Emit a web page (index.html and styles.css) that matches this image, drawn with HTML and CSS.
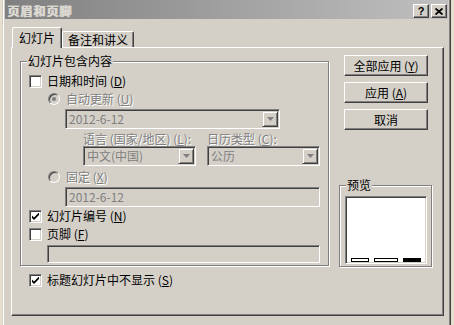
FILE: index.html
```html
<!DOCTYPE html>
<html lang="zh-CN">
<head>
    <meta charset="UTF-8">
    <title>页眉和页脚</title>
    <link rel="stylesheet" href="styles.css">
</head>
<body>
    <div class="dialog">
        <div class="titlebar">
            <span class="title">页眉和页脚</span>
            <div class="caption-btns">
                <span class="cap-btn">?</span>
                <span class="cap-btn">
                    <svg width="8" height="7" viewBox="0 0 8 7"><path d="M0.5 0.5 L7.5 6.5 M7.5 0.5 L0.5 6.5" stroke="#000" stroke-width="1.8" fill="none"/></svg>
                </span>
            </div>
        </div>

        <div class="tabs">
            <div class="tab active">幻灯片</div>
            <div class="tab notes">备注和讲义</div>
        </div>

        <div class="panel">
            <div class="panel-top">
                <!-- 幻灯片包含内容 -->
                <div class="group content-group">
                    <span class="group-title">幻灯片包含内容</span>

                    <div class="row mt0">
                        <span class="check"></span>
                        <span>日期和时间 (<u>D</u>)</span>
                    </div>
                    <div class="row indent mt4 disabled">
                        <span class="radio on"></span>
                        <span>自动更新 (<u>U</u>)</span>
                    </div>
                    <div class="field drop-field date1 mt3">
                        <span class="value">2012-6-12</span>
                        <span class="drop"><svg width="7" height="4" viewBox="0 0 7 4"><path d="M0 0 H7 L3.5 4 Z" fill="#808080"/></svg></span>
                    </div>
                    <div class="pair labels mt3 disabled">
                        <span>语言 (国家/地区) (<u>L</u>):</span>
                        <span>日历类型 (<u>C</u>):</span>
                    </div>
                    <div class="pair mt0">
                        <div class="field drop-field">
                            <span class="value">中文(中国)</span>
                            <span class="drop"><svg width="7" height="4" viewBox="0 0 7 4"><path d="M0 0 H7 L3.5 4 Z" fill="#808080"/></svg></span>
                        </div>
                        <div class="field drop-field">
                            <span class="value">公历</span>
                            <span class="drop"><svg width="7" height="4" viewBox="0 0 7 4"><path d="M0 0 H7 L3.5 4 Z" fill="#808080"/></svg></span>
                        </div>
                    </div>
                    <div class="row indent mt4 disabled">
                        <span class="radio"></span>
                        <span>固定 (<u>X</u>)</span>
                    </div>
                    <div class="field date2 mt3">
                        <span class="value">2012-6-12</span>
                    </div>
                    <div class="row mt2">
                        <span class="check"><svg width="7" height="7" viewBox="0 0 7 7"><path d="M0 2.5 L2 4.5 L7 -0.5 L7 2 L2 7 L0 5 Z" fill="#000"/></svg></span>
                        <span>幻灯片编号 (<u>N</u>)</span>
                    </div>
                    <div class="row mt4">
                        <span class="check"></span>
                        <span>页脚 (<u>F</u>)</span>
                    </div>
                    <div class="field footer-field mt4"></div>
                </div>

                <div class="side">
                    <div class="buttons">
                        <div class="btn">全部应用 (<u>Y</u>)</div>
                        <div class="btn">应用 (<u>A</u>)</div>
                        <div class="btn">取消</div>
                    </div>
                    <div class="group preview-group">
                        <span class="group-title">预览</span>
                        <div class="preview">
                            <span class="bar"></span>
                            <span class="bar wide"></span>
                            <span class="bar solid"></span>
                        </div>
                    </div>
                </div>
            </div>

            <div class="row bottom-row">
                <span class="check"><svg width="7" height="7" viewBox="0 0 7 7"><path d="M0 2.5 L2 4.5 L7 -0.5 L7 2 L2 7 L0 5 Z" fill="#000"/></svg></span>
                <span>标题幻灯片中不显示 (<u>S</u>)</span>
            </div>
        </div>
    </div>
</body>
</html>
```

FILE: styles.css
```css
* {
    box-sizing: border-box;
}
html, body {
    margin: 0;
}
body {
    width: 454px;
    height: 325px;
    overflow: hidden;
    background-color: #e6dfce;
    font-family: "Noto Sans CJK SC", "Noto Sans", sans-serif;
    font-size: 12px;
    line-height: 14px;
    color: #000;
}
u {
    text-decoration-thickness: 1px;
    text-underline-offset: 1px;
}

/* ウィンドウ */
.dialog {
    width: 449px;
    height: 340px;
    margin: -4px 0 0 2px;
    padding: 2px;
    background-color: #d4d0c8;
    border: 1px solid;
    border-color: #d4d0c8 #404040 #404040 #d4d0c8;
    box-shadow: inset 1px 1px #fff, inset -1px -1px #808080;
}
.titlebar {
    height: 20px;
    display: flex;
    align-items: flex-end;
    justify-content: space-between;
    padding: 0 1px 1px 2px;
    background: linear-gradient(to right, #808080, #c0c0c0);
}
.title {
    color: #dcd9d2;
    font-weight: bold;
    text-shadow: 1px 0 0 #dcd9d2;
    letter-spacing: 1px;
}
.caption-btns {
    display: flex;
    gap: 2px;
}
.cap-btn {
    width: 16px;
    height: 14px;
    display: flex;
    align-items: center;
    justify-content: center;
    background-color: #d4d0c8;
    border: 1px solid;
    border-color: #fff #404040 #404040 #fff;
    box-shadow: inset -1px -1px #808080;
    font: bold 11px/1 "Liberation Sans", sans-serif;
}

/* タブ */
.tabs {
    display: flex;
    align-items: flex-end;
    height: 20px;
    margin: 8px 0 0 6px;
    padding-left: 1px;
}
.tab {
    height: 16px;
    padding-top: 1px;
    text-align: center;
    background-color: #d4d0c8;
    border: 1px solid;
    border-bottom: 0;
    border-color: #fff #404040 #404040 #fff;
    border-radius: 2px 2px 0 0;
    box-shadow: inset -1px 0 #808080;
}
.tab.active {
    width: 50px;
    height: 21px;
    padding-top: 3px;
    margin-bottom: -1px;
    position: relative;
    z-index: 1;
}
.tab.notes {
    width: 72px;
}
.panel {
    height: 269px;
    margin: 0 4px 0 6px;
    padding-left: 8px;
    border: 1px solid;
    border-color: #fff #404040 #404040 #fff;
    box-shadow: inset -1px -1px #808080;
}
.panel-top {
    display: flex;
    align-items: flex-start;
}

/* グループ枠 */
.group {
    position: relative;
    border: 1px solid #808080;
    box-shadow: inset 1px 1px #fff, 1px 1px #fff;
}
.group-title {
    position: absolute;
    left: 6px;
    top: -8px;
    padding: 0 1px;
    background-color: #d4d0c8;
}
.content-group {
    width: 309px;
    height: 205px;
    margin-top: 13px;
    padding: 12px 8px 0;
    display: flex;
    flex-direction: column;
}
.row {
    display: flex;
    align-items: center;
    height: 14px;
}
.indent {
    padding-left: 19px;
}
.mt0 { margin-top: 0; }
.mt2 { margin-top: 2px; }
.mt3 { margin-top: 3px; }
.mt4 { margin-top: 4px; }

.disabled {
    color: #808080;
    text-shadow: 1px 1px 0 #fff;
}
.check {
    width: 13px;
    height: 13px;
    flex: none;
    margin-right: 5px;
    display: flex;
    align-items: center;
    justify-content: center;
    background-color: #fff;
    border: 1px solid;
    border-color: #808080 #fff #fff #808080;
    box-shadow: inset 1px 1px #404040, inset -1px -1px #d4d0c8;
}
.radio {
    width: 12px;
    height: 12px;
    flex: none;
    margin-right: 6px;
    border-radius: 50%;
    position: relative;
    background-color: #d4d0c8;
    border: 1px solid;
    border-color: #808080 #fff #fff #808080;
    box-shadow: inset 1px 1px #404040, inset -1px -1px #d4d0c8;
}
.radio.on::after {
    content: "";
    position: absolute;
    left: 3px;
    top: 3px;
    width: 4px;
    height: 4px;
    border-radius: 50%;
    background-color: #808080;
}

/* 入力欄 */
.field {
    height: 20px;
    display: flex;
    align-items: center;
    justify-content: space-between;
    padding: 1px 1px 1px 2px;
    color: #808080;
    background-color: #d4d0c8;
    border: 1px solid;
    border-color: #808080 #fff #fff #808080;
    box-shadow: inset 1px 1px #404040, inset -1px -1px #d4d0c8;
}
.value {
    padding-left: 1px;
}
.drop {
    width: 16px;
    height: 16px;
    display: flex;
    align-items: center;
    justify-content: center;
    background-color: #d4d0c8;
    border: 1px solid;
    border-color: #d4d0c8 #404040 #404040 #d4d0c8;
    box-shadow: inset 1px 1px #fff, inset -1px -1px #808080;
}
.date1 {
    width: 215px;
    margin-left: 36px;
}
.date2 {
    margin-left: 36px;
}
.footer-field {
    height: 18px;
    margin-left: 18px;
}
.pair {
    display: grid;
    grid-template-columns: 113px 113px;
    column-gap: 11px;
    margin-left: 54px;
}
.labels {
    height: 14px;
    white-space: nowrap;
}

/* 右側 */
.side {
    width: 94px;
    margin: 7px 0 0 10px;
}
.buttons {
    display: flex;
    flex-direction: column;
    gap: 6px;
    padding-left: 5px;
}
.btn {
    width: 84px;
    height: 21px;
    line-height: 19px;
    text-align: center;
    background-color: #d4d0c8;
    border: 1px solid;
    border-color: #fff #404040 #404040 #fff;
    box-shadow: inset -1px -1px #808080;
}
.preview-group {
    width: 93px;
    height: 82px;
    margin-top: 55px;
    padding: 10px 0 0 5px;
}
.preview {
    width: 82px;
    height: 68px;
    display: flex;
    align-items: flex-end;
    gap: 5px;
    padding: 0 0 1px 5px;
    background-color: #fff;
    border: 1px solid;
    border-color: #808080 #fff #fff #808080;
    box-shadow: inset 1px 1px #404040, inset -1px -1px #d4d0c8;
}
.bar {
    width: 18px;
    height: 4px;
    border: 1px solid #000;
    background-color: #fff;
}
.bar.wide {
    width: 24px;
}
.bar.solid {
    background-color: #000;
}
.bottom-row {
    margin: 6px 0 0 9px;
}
```
